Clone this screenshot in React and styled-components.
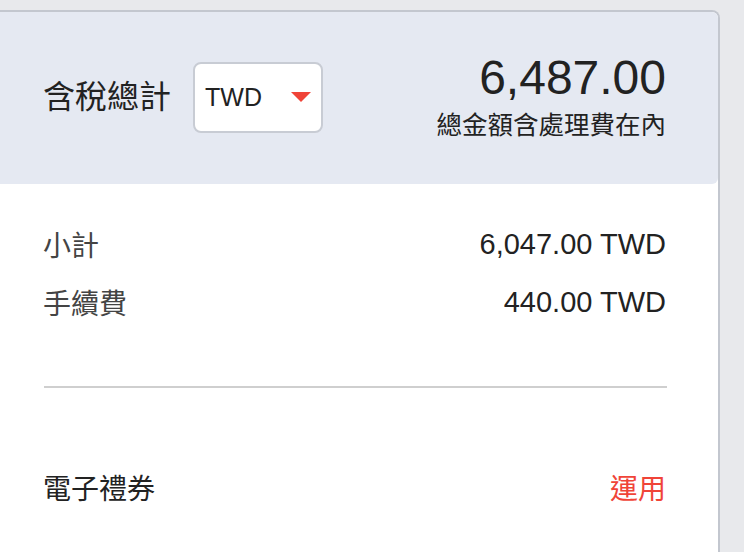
import React from 'react'
import styled, { createGlobalStyle } from 'styled-components'

const GlobalStyle = createGlobalStyle`
    body {
        margin: 0;
        background-color: #e8e9ec;
        font-family: 'Liberation Sans', 'Noto Sans CJK TC', sans-serif;
        color: #222;
    }
`

function App() {
    return (
        <Page>
            <GlobalStyle />
            <Card>
                <Header>
                    <LeftGroup>
                        <TotalLabel>含稅總計</TotalLabel>
                        <Select>
                            <span>TWD</span>
                            <Caret />
                        </Select>
                    </LeftGroup>
                    <TotalBlock>
                        <Amount>6,487.00</Amount>
                        <Note>總金額含處理費在內</Note>
                    </TotalBlock>
                </Header>
                <Body>
                    <Row>
                        <Label>小計</Label>
                        <Value>6,047.00 TWD</Value>
                    </Row>
                    <Row>
                        <Label>手續費</Label>
                        <Value>440.00 TWD</Value>
                    </Row>
                    <Divider />
                    <Row $spaced>
                        <Label $dark>電子禮券</Label>
                        <Action>運用</Action>
                    </Row>
                </Body>
            </Card>
        </Page>
    )
}

export default App

const Page = styled.div`
    padding: 10px 24px 0 0;
    height: 552px;
    box-sizing: border-box;
    overflow: hidden;
`

const Card = styled.div`
    background-color: #fff;
    border: 2px solid #c3c7cf;
    border-left: none;
    border-radius: 0 8px 0 0;
    height: 600px;
`

const Header = styled.div`
    height: 172px;
    box-sizing: border-box;
    background-color: #e5e9f2;
    border-radius: 0 6px 6px 0;
    display: flex;
    align-items: center;
    justify-content: space-between;
    padding: 0 52px 2px 43px;
`

const LeftGroup = styled.div`
    display: flex;
    align-items: center;
    gap: 22px;
`

const TotalLabel = styled.span`
    font-size: 32px;
    line-height: 40px;
`

const Select = styled.div`
    width: 130px;
    height: 71px;
    box-sizing: border-box;
    border: 2px solid #c8ccd4;
    border-radius: 8px;
    background-color: #fff;
    display: flex;
    align-items: center;
    justify-content: space-between;
    padding: 0 10px 0 10px;
    font-size: 25px;
`

const Caret = styled.span`
    width: 0;
    height: 0;
    border-left: 10px solid transparent;
    border-right: 10px solid transparent;
    border-top: 10px solid #f04438;
`

const TotalBlock = styled.div`
    display: flex;
    flex-direction: column;
    align-items: flex-end;
    gap: 8px;
`

const Amount = styled.div`
    font-size: 48px;
    line-height: 48px;
`

const Note = styled.div`
    font-size: 25.5px;
    line-height: 30px;
`

const Body = styled.div`
    padding: 31px 52px 0 43px;
`

const Row = styled.div`
    display: flex;
    justify-content: space-between;
    align-items: center;
    height: 58px;
    margin-top: ${props => props.$spaced ? '70px' : '0'};
`

const Label = styled.span`
    font-size: 28px;
    color: ${props => props.$dark ? '#222' : '#444'};
`

const Value = styled.span`
    font-size: 29px;
    color: #222;
`

const Action = styled.span`
    font-size: 28px;
    color: #f04438;
    cursor: pointer;
`

const Divider = styled.div`
    height: 2px;
    background-color: #cfcfcf;
    margin: 55px -1px 0 1px;
`
